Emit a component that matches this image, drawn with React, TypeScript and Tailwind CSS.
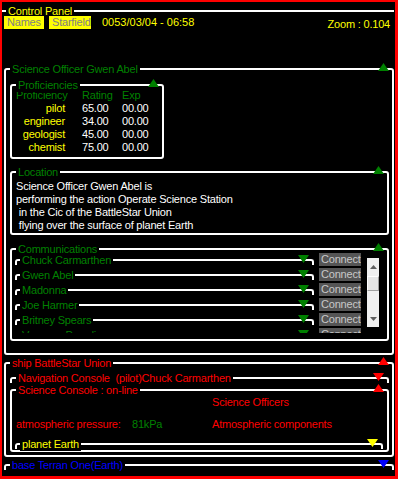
import React from "react";

const GREEN = "#008000";
const RED = "#ff0000";
const YELLOW = "#ffff00";
const BLUE = "#0000ff";

function Up({ color }: { color: string }) {
  return (
    <svg width="11" height="8" viewBox="0 0 11 8" className="absolute right-[3px] top-[-7px]">
      <polygon points="5.5,0 11,8 0,8" fill={color} />
    </svg>
  );
}

function Down({ color }: { color: string }) {
  return (
    <svg width="11" height="8" viewBox="0 0 11 8" className="absolute right-[3px] top-[-6px]">
      <polygon points="0,0 11,0 5.5,8" fill={color} />
    </svg>
  );
}

function Box({
  label,
  labelClass,
  tri,
  className,
  left = "left-[4px]",
  children,
}: {
  label: string;
  labelClass: string;
  tri?: React.ReactNode;
  className: string;
  left?: string;
  children?: React.ReactNode;
}) {
  return (
    <div className={`relative border-2 border-white rounded-[3px] ${className}`}>
      <span
        className={`absolute top-[-7px] ${left} bg-black px-[2px] leading-[13px] whitespace-pre ${labelClass}`}
      >
        {label}
      </span>
      {tri}
      {children}
    </div>
  );
}

const profs: [string, string][] = [
  ["pilot", "65.00"],
  ["engineer", "34.00"],
  ["geologist", "45.00"],
  ["chemist", "75.00"],
];

const contacts = [
  "Chuck Carmarthen",
  "Gwen Abel",
  "Madonna",
  "Joe Harmer",
  "Britney Spears",
  "Vanessa Paradis",
];

const locationLines = [
  "Science Officer Gwen Abel is",
  "performing the action Operate Science Station",
  " in the Cic of the BattleStar Union",
  " flying over the surface of planet Earth",
];

export default function App() {
  return (
    <div className="w-[398px] h-[479px] bg-black border-t-2 border-l-2 border-r-[3px] border-b-[3px] border-[#ff0000] flex flex-col overflow-hidden font-['Liberation_Sans',Arial,sans-serif] text-[11px] leading-[13px] tracking-[-0.2px]">
      {/* Control Panel header */}
      <div className="mt-[3px] mr-[1px] flex h-[11px] items-start">
        <div className="mt-[5px] h-[2px] w-[4px] bg-white" />
        <span className="px-[2px] leading-[13px] text-[#ffff00] whitespace-nowrap">Control Panel</span>
        <div className="mt-[5px] h-[2px] flex-1 bg-white" />
      </div>

      {/* buttons row */}
      <div className="flex h-[13px] items-start">
        <div className="ml-[2px] h-[13px] w-[40px] bg-[#ffff00] pl-[3px] text-[#808080] whitespace-nowrap">Names</div>
        <div className="ml-[5px] h-[13px] w-[42px] bg-[#ffff00] pl-[3px] text-[#808080] whitespace-nowrap">Starfield</div>
        <div className="ml-[11px] text-[#ffff00] whitespace-nowrap tracking-normal">0053/03/04 - 06:58</div>
        <div className="ml-auto mr-[5px] mt-[2px] text-[#ffff00] whitespace-nowrap">Zoom : 0.104</div>
      </div>

      {/* Science Officer */}
      <Box
        label="Science Officer Gwen Abel"
        labelClass="text-[#008000]"
        tri={<Up color={GREEN} />}
        className="mt-[39px] ml-[2px] mr-[1px] h-[287px] pt-[14px] pl-[4px] pr-[3px] flex flex-col"
      >
        <Box
          label="Proficiencies"
          labelClass="text-[#008000]"
          tri={<Up color={GREEN} />}
          className="h-[75px] w-[154px] pt-[3px] pl-[4px] flex flex-col"
        >
          <div className="flex text-[#008000]">
            <span className="w-[66px] whitespace-nowrap">Proficiency</span>
            <span className="w-[40px]">Rating</span>
            <span>Exp</span>
          </div>
          {profs.map(([n, r]) => (
            <div key={n} className="flex">
              <span className="w-[49px] text-right text-[#ffff00]">{n}</span>
              <span className="ml-[17px] w-[40px] text-white">{r}</span>
              <span className="text-white">00.00</span>
            </div>
          ))}
        </Box>

        <Box
          label="Location"
          labelClass="text-[#008000]"
          tri={<Up color={GREEN} />}
          className="mt-[12px] h-[64px] pt-[7px] pl-[4px] flex flex-col"
        >
          {locationLines.map((l) => (
            <div key={l} className="whitespace-pre text-white">
              {l}
            </div>
          ))}
        </Box>

        <Box
          label="Communications"
          labelClass="text-[#008000]"
          tri={<Up color={GREEN} />}
          className="mt-[13px] h-[93px] pt-[2px] pl-[3px] flex"
        >
          <div className="w-[346px] h-[81px] overflow-hidden flex flex-col">
            {contacts.map((n) => (
              <div key={n} className="flex h-[15px] shrink-0">
                <div className="w-[299px] pt-[7px]">
                  <Box
                    label={n}
                    labelClass="text-[#008000]"
                    left="left-[3px]"
                    tri={<Down color={GREEN} />}
                    className="h-[6px] border-b-0 rounded-b-none"
                  />
                </div>
                <div className="ml-[5px] mt-[1px] h-[13px] w-[42px] bg-[#555555] pl-[2px] text-[#c8c8c8] whitespace-nowrap">
                  Connect
                </div>
              </div>
            ))}
          </div>
          <div className="ml-[6px] mt-[6px] w-[12px] h-[69px] bg-[#f0f0f0] flex flex-col items-center">
            <svg width="7" height="4" viewBox="0 0 7 4" className="mt-[7px]">
              <polygon points="3.5,0 7,4 0,4" fill="#606060" />
            </svg>
            <div className="mt-[7px] h-[15px] w-[12px] bg-[#e6e6e6] border-t border-l border-t-white border-l-white border-r border-b border-r-[#a0a0a0] border-b-[#a0a0a0]" />
            <div className="flex-1" />
            <svg width="7" height="4" viewBox="0 0 7 4" className="mb-[6px]">
              <polygon points="0,0 7,0 3.5,4" fill="#606060" />
            </svg>
          </div>
        </Box>
      </Box>

      {/* Ship */}
      <Box
        label="ship BattleStar Union"
        labelClass="text-[#ff0000]"
        tri={<Up color={RED} />}
        className="mt-[7px] ml-[2px] mr-[1px] h-[95px] pt-[13px] pl-[4px] pr-[3px] flex flex-col"
      >
        <Box
          label="Navigation Console  (pilot)Chuck Carmarthen"
          labelClass="text-[#ff0000]"
          tri={<Down color={RED} />}
          className="h-[6px] border-b-0 rounded-b-none"
        />
        <Box
          label="Science Console : on-line"
          labelClass="text-[#ff0000]"
          tri={<Up color={RED} />}
          className="mt-[6px] h-[63px] pt-[5px] flex flex-col"
        >
          <div className="grid grid-cols-[116px_80px_auto] pl-[4px]">
            <span />
            <span />
            <span className="text-[#ff0000] whitespace-nowrap">Science Officers</span>
          </div>
          <div className="mt-[9px] grid grid-cols-[116px_80px_auto] pl-[4px]">
            <span className="text-[#ff0000] whitespace-nowrap">atmospheric pressure:</span>
            <span className="text-[#008000]">81kPa</span>
            <span className="text-[#ff0000] whitespace-nowrap">Atmospheric components</span>
          </div>
          <div className="mt-[12px] ml-[3px] mr-[4px]">
            <Box
              label="planet Earth"
              labelClass="text-[#ffff00]"
              left="left-[3px]"
              tri={<Down color={YELLOW} />}
              className="h-[6px] border-b-0 rounded-b-none"
            />
          </div>
        </Box>
      </Box>

      {/* Base */}
      <Box
        label="base Terran One(Earth)"
        labelClass="text-[#0000ff]"
        tri={<Down color={BLUE} />}
        className="mt-[7px] ml-[2px] mr-[1px] h-[6px] border-b-0 rounded-b-none"
      />
    </div>
  );
}
